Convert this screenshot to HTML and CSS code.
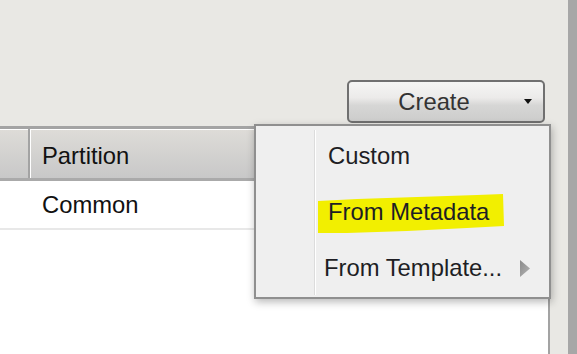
FILE: index.html
```html
<!DOCTYPE html>
<html>
<head>
<meta charset="utf-8">
<link rel="stylesheet" href="styles.css">
</head>
<body>
<div class="screen">
  <div class="main">
    <div class="toolbar">
      <button class="create-btn"><span class="create-label">Create</span><span class="caret"></span></button>
    </div>
    <div class="panel">
      <div class="thead">
        <div class="th th-first"></div>
        <div class="th th-part">Partition</div>
      </div>
      <div class="trow">
        <div class="td td-first"></div>
        <div class="td td-part">Common</div>
      </div>
    </div>
  </div>
  <div class="strip"></div>

  <div class="menu">
    <div class="menu-sep"></div>
    <div class="menu-item item-custom"><span class="item-text">Custom</span></div>
    <div class="menu-item item-meta">
      <svg class="highlight" width="200" height="44" viewBox="0 0 200 44">
        <polygon points="1,7 40,5 100,3 160,1 186,0 187,32 150,34 90,37 30,39 1,39" fill="#f2ef00"/>
      </svg>
      <span class="item-text">From Metadata</span>
    </div>
    <div class="menu-item item-tpl">
      <span class="item-text">From Template...</span>
      <svg class="sub-arrow" width="11" height="17" viewBox="0 0 11 17">
        <defs>
          <linearGradient id="ag" x1="0" y1="0" x2="1" y2="1">
            <stop offset="0" stop-color="#8a8a8a"/>
            <stop offset="1" stop-color="#b4b4b4"/>
          </linearGradient>
        </defs>
        <polygon points="0,0 10,8.5 0,17" fill="url(#ag)"/>
      </svg>
    </div>
  </div>
</div>
</body>
</html>
```

FILE: styles.css
```css
* { box-sizing: border-box; }
html, body {
  margin: 0;
  padding: 0;
}
body {
  width: 577px;
  height: 354px;
  overflow: hidden;
  background: #e9e8e4;
  font-family: "Liberation Sans", Arial, sans-serif;
  font-size: 23.8px;
}
.screen {
  position: relative;
  display: flex;
  width: 577px;
  height: 354px;
}
.main {
  width: 568px;
  display: flex;
  flex-direction: column;
}
.strip {
  width: 9px;
  background: #a7a7a7;
}
.toolbar {
  height: 126px;
  display: flex;
  justify-content: flex-end;
  align-items: flex-start;
  padding-top: 80px;
  padding-right: 23px;
}
.create-btn {
  width: 198px;
  height: 43px;
  border: 2px solid #707070;
  border-radius: 5px;
  background: linear-gradient(#f5f5f4 0%, #ecebea 40%, #d6d6d5 60%, #cdcdcc 100%);
  display: flex;
  align-items: center;
  padding: 0;
  font: inherit;
  color: #333;
}
.create-label {
  width: 170px;
  text-align: center;
  line-height: 38px;
}
.caret {
  width: 0;
  height: 0;
  margin-left: 5px;
  border-left: 4.5px solid transparent;
  border-right: 4.5px solid transparent;
  border-top: 5px solid #111;
}
.panel {
  width: 550px;
  flex: 1;
  background: #fff;
  border-right: 2px solid #a3a3a3;
}
.thead {
  display: flex;
  border-top: 3px solid #a4a4a4;
  border-bottom: 3px solid #aaaaaa;
  background: linear-gradient(#dedcd8, #c8c8c8);
  box-shadow: inset 0 1px 0 #ffffff;
  height: 55px;
}
.th {
  height: 49px;
  padding-top: 5px;
  line-height: 44px;
  color: #111;
}
.th-first {
  width: 30px;
  border-right: 2px solid #a3a3a3;
}
.th-part {
  flex: 1;
  padding-left: 11px;
  border-left: 1px solid #ffffff;
}
.trow {
  display: flex;
  height: 49px;
  border-bottom: 2px solid #e8e8e8;
}
.td {
  line-height: 47px;
  color: #111;
}
.td-first { width: 30px; }
.td-part { padding-left: 12px; }

.menu {
  position: absolute;
  left: 254px;
  top: 124px;
  width: 297px;
  height: 175px;
  background: #efefef;
  border: 2px solid #8f8f8f;
  box-shadow: 1px 3px 8px rgba(0, 0, 0, 0.28);
  padding-top: 2px;
}
.menu-sep {
  position: absolute;
  left: 58px;
  top: 4px;
  width: 2px;
  height: 165px;
  background: #dcdcdc;
  border-right: 1px solid #ffffff;
}
.menu-item {
  position: relative;
  height: 56px;
  line-height: 56px;
  color: #1e1e24;
  display: flex;
  align-items: center;
}
.item-custom, .item-meta { padding-left: 72px; }
.item-tpl { padding-left: 68px; }
.item-text {
  position: relative;
  line-height: 56px;
}
.highlight {
  position: absolute;
  left: 61px;
  top: 10px;
}
.sub-arrow {
  margin-left: 18px;
  margin-top: 1px;
}
```
